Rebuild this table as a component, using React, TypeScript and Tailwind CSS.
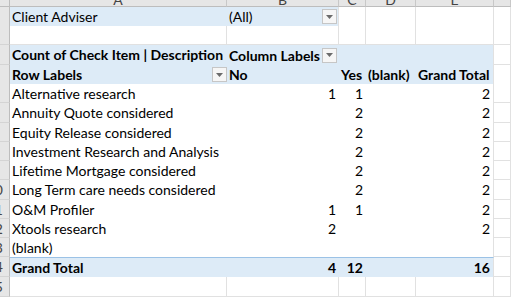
import type { ReactNode } from 'react';

const GRID = 'grid grid-cols-[10px_217px_112px_27px_50px_78px_1fr]';

// plain worksheet cell with gridlines
const PLAIN = 'bg-white border-r border-b border-[#e1e1e1]';
// pivot header / total fill
const BLUE = 'bg-[#ddebf7]';

type Line = { label: string; no: string; yes: string; blank: string; total: string };

const lines: Line[] = [
  { label: 'Alternative research', no: '1', yes: '1', blank: '', total: '2' },
  { label: 'Annuity Quote considered', no: '', yes: '2', blank: '', total: '2' },
  { label: 'Equity Release considered', no: '', yes: '2', blank: '', total: '2' },
  { label: 'Investment Research and Analysis', no: '', yes: '2', blank: '', total: '2' },
  { label: 'Lifetime Mortgage considered', no: '', yes: '2', blank: '', total: '2' },
  { label: 'Long Term care needs considered', no: '', yes: '2', blank: '', total: '2' },
  { label: 'O&M Profiler', no: '1', yes: '1', blank: '', total: '2' },
  { label: 'Xtools research', no: '2', yes: '', blank: '', total: '2' },
  { label: '(blank)', no: '', yes: '', blank: '', total: '' },
];

const tallData = [false, true, false, false, false, true, false, false, false];

function Drop() {
  return (
    <span className="flex h-[15px] w-[15px] shrink-0 items-center justify-center border border-[#c6c6c6] bg-[#f6f6f6]">
      <svg width="7" height="4" viewBox="0 0 7 4">
        <path d="M0 0h7L3.5 4z" fill="#6b6b6b" />
      </svg>
    </span>
  );
}

function RowNum({ n }: { n: number }) {
  return (
    <div className="relative overflow-hidden border-r border-b border-r-[#bdbdbd] border-b-[#d4d4d4] bg-[#e6e6e6]">
      {n >= 10 && (
        <span className="absolute right-[6px] top-0 text-[#444]">{n}</span>
      )}
    </div>
  );
}

function Row({ n, tall, children }: { n: number; tall?: boolean; children: ReactNode }) {
  return (
    <div className={`${GRID} ${tall ? 'h-[20px]' : 'h-[19px]'}`}>
      <RowNum n={n} />
      {children}
    </div>
  );
}

function ColHead({ letter }: { letter?: string }) {
  return (
    <div className="relative overflow-hidden border-r border-b border-r-[#c8c8c8] border-b-[#bdbdbd] bg-[#e6e6e6]">
      {letter && (
        <span className="absolute left-0 right-0 top-[-10px] text-center text-[#444]">{letter}</span>
      )}
    </div>
  );
}

export default function App() {
  return (
    <div className="h-[297px] w-[511px] overflow-hidden bg-white font-['Lato','Liberation_Sans',sans-serif] text-[14px] leading-[19px] text-black">
      {/* column letters; F sits past the right edge */}
      <div className={`${GRID} h-[7px]`}>
        <div className="border-r border-b border-r-[#bdbdbd] border-b-[#bdbdbd] bg-[#e6e6e6]" />
        <ColHead letter="A" />
        <ColHead letter="B" />
        <ColHead letter="C" />
        <ColHead letter="D" />
        <ColHead letter="E" />
        <ColHead />
      </div>

      {/* report filter */}
      <Row n={1}>
        <div className={`${BLUE} border-b border-[#e1e1e1] pl-[2px]`}>Client Adviser</div>
        <div className={`${BLUE} flex items-center justify-between border-r border-b border-[#e1e1e1] pl-[2px] pr-px`}>
          <span>(All)</span>
          <Drop />
        </div>
        <div className={PLAIN} />
        <div className={PLAIN} />
        <div className={PLAIN} />
        <div className={PLAIN} />
      </Row>

      <Row n={2}>
        <div className={PLAIN} />
        <div className={PLAIN} />
        <div className={PLAIN} />
        <div className={PLAIN} />
        <div className={PLAIN} />
        <div className={PLAIN} />
      </Row>

      {/* pivot header */}
      <Row n={3} tall>
        <div className={`${BLUE} whitespace-nowrap pl-[2px] font-bold`}>Count of Check Item | Description</div>
        <div className={`${BLUE} flex items-center justify-between pl-[2px] pr-[2px] font-bold`}>
          <span>Column Labels</span>
          <Drop />
        </div>
        <div className={BLUE} />
        <div className={BLUE} />
        <div className={`${BLUE} border-r border-[#e1e1e1]`} />
        <div className={PLAIN} />
      </Row>

      <Row n={4}>
        <div className={`${BLUE} flex items-center justify-between border-b border-[#b9d3ee] pl-[2px] font-bold`}>
          <span>Row Labels</span>
          <Drop />
        </div>
        <div className={`${BLUE} border-b border-[#b9d3ee] pl-[2px] font-bold`}>No</div>
        <div className={`${BLUE} border-b border-[#b9d3ee] pl-[2px] font-bold`}>Yes</div>
        <div className={`${BLUE} border-b border-[#b9d3ee] pl-[2px] font-bold`}>(blank)</div>
        <div className={`${BLUE} border-r border-b border-r-[#e1e1e1] border-b-[#b9d3ee] pl-[2px] font-bold`}>Grand Total</div>
        <div className={PLAIN} />
      </Row>

      {lines.map((l, i) => (
        <Row key={l.label} n={5 + i} tall={tallData[i]}>
          <div className="whitespace-nowrap bg-white pl-[2px]">{l.label}</div>
          <div className="bg-white pr-[3px] text-right">{l.no}</div>
          <div className="bg-white pr-[3px] text-right">{l.yes}</div>
          <div className="bg-white pr-[3px] text-right">{l.blank}</div>
          <div className="border-r border-[#e1e1e1] bg-white pr-[3px] text-right">{l.total}</div>
          <div className={PLAIN} />
        </Row>
      ))}

      {/* totals */}
      <Row n={14} tall>
        <div className={`${BLUE} border-t border-[#9bc2e6] pl-[2px] font-bold`}>Grand Total</div>
        <div className={`${BLUE} border-t border-[#9bc2e6] pr-[3px] text-right font-bold`}>4</div>
        <div className={`${BLUE} border-t border-[#9bc2e6] pr-[3px] text-right font-bold`}>12</div>
        <div className={`${BLUE} border-t border-[#9bc2e6]`} />
        <div className={`${BLUE} border-t border-r border-t-[#9bc2e6] border-r-[#e1e1e1] pr-[3px] text-right font-bold`}>16</div>
        <div className={PLAIN} />
      </Row>

      <Row n={15} tall>
        <div className={PLAIN} />
        <div className={PLAIN} />
        <div className={PLAIN} />
        <div className={PLAIN} />
        <div className={PLAIN} />
        <div className={PLAIN} />
      </Row>
    </div>
  );
}
